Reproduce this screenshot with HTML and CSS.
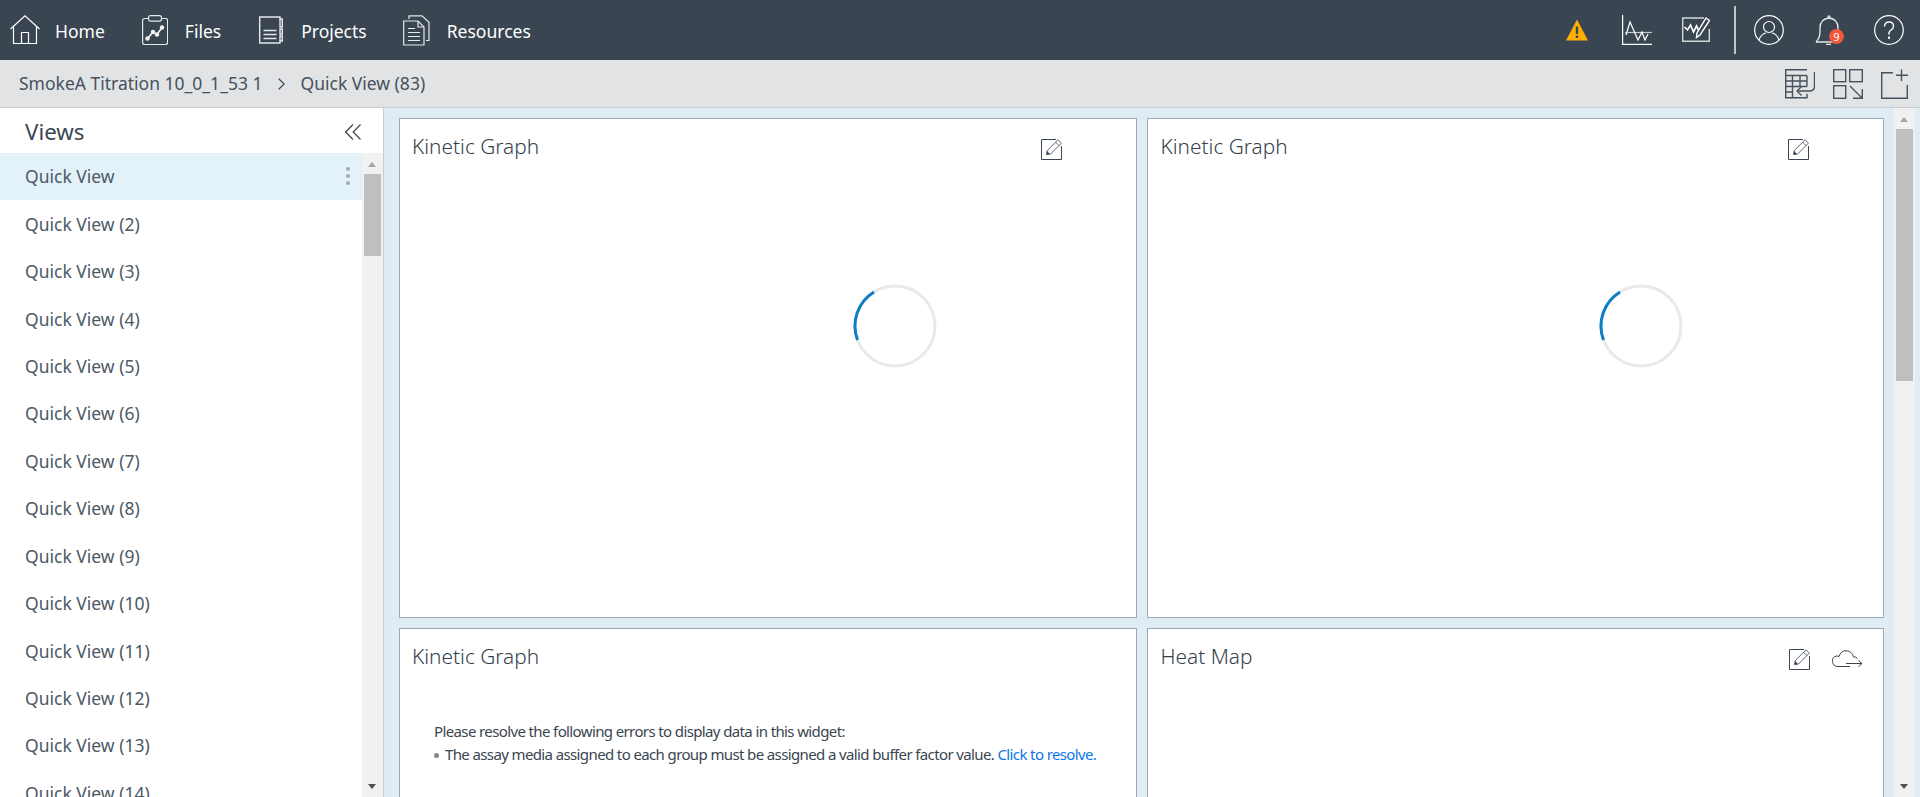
FILE: index.html
```html
<!DOCTYPE html>
<html lang="en">

<head>
    <meta charset="UTF-8" />
    <title>Quick View (83)</title>
    <link rel="stylesheet" href="styles.css">
</head>

<body>
    <svg class="defs" width="0" height="0">
        <symbol id="edit" viewBox="0 0 21 21">
            <path d="M15 .5H.5v20h20V7" fill="none" stroke="#3a4653" stroke-width="1" />
            <path d="M17 .8l3.400 3.400L9.600 15l-3.800.6.4-4z" fill="#fff" stroke="#5c6773" stroke-width="1" />
            <path d="M14.600 3.200l3.400 3.400" stroke="#5c6773" stroke-width="1" />
            <path d="M6 12l3 3-3.800.8z" fill="#3a4653" />
        </symbol>
    </svg>

    <header class="topbar">
        <nav class="topnav">
            <a class="navitem nav-home">
                <svg width="30" height="30" viewBox="0 0 30 30" fill="none" stroke="#fff" stroke-width="1.2">
                    <path d="M.5 14L15 .8 29.500 14" />
                    <path d="M3.500 11.500v17h23v-17" />
                    <path d="M11.500 28.500V17.500h7v11" />
                </svg>
                <span>Home</span>
            </a>
            <a class="navitem nav-files">
                <svg width="26" height="30" viewBox="0 0 26 30" fill="none" stroke="#e6e8ea" stroke-width="1.2">
                    <path d="M7 3.500H2.500Q.6 3.500 .6 5.500v22q0 2 2 2h21q2 0 2-2v-22q0-2-2-2H19" />
                    <rect x="6.500" y=".6" width="13" height="5.500" rx="2" />
                    <path d="M6 23l5-6 4 2.500 5-7" stroke="#fff" stroke-width="1.500" />
                    <circle cx="5.500" cy="23.500" r="1.700" fill="#fff" />
                    <circle cx="11" cy="17" r="1.700" fill="#fff" />
                    <circle cx="15" cy="19.500" r="1.700" fill="#fff" />
                    <circle cx="20" cy="12.500" r="1.700" fill="#fff" />
                </svg>
                <span>Files</span>
            </a>
            <a class="navitem nav-projects">
                <svg width="24" height="28" viewBox="0 0 24 28" fill="none" stroke="#e6e8ea" stroke-width="1.400">
                    <path d="M21 3V1H.7v26H21v-2" />
                    <path d="M21 3h2.300v8H21zM21 13h2.300v5H21zM21 20h2.300v5H21z" />
                    <path d="M4.500 14.500h13M4.500 18.500h13M4.500 22.500h13" />
                </svg>
                <span>Projects</span>
            </a>
            <a class="navitem nav-resources">
                <svg width="28" height="31" viewBox="0 0 28 31" fill="none" stroke="#e6e8ea" stroke-width="1.200">
                    <path d="M6 4V.8h13l7 6.500V25.500h-3" />
                    <path d="M.7 6h14.300l6 6v18H.7z" />
                    <path d="M15 6v6h6" />
                    <path d="M5 13.500h7M5 17.500h12M5 21.500h12M5 25.500h12" />
                </svg>
                <span>Resources</span>
            </a>
        </nav>
        <div class="topicons">
            <svg class="ic-warn" width="22" height="22" viewBox="0 0 22 22">
                <path d="M11 .5L22 21.500H0z" fill="#ffb000" />
                <path d="M9.800 7.500h2.400v7.500H9.800zM9.800 16.500h2.400v2.400H9.800z" fill="#3a4653" />
            </svg>
            <svg class="ic-chart" width="30" height="30" viewBox="0 0 30 30" fill="none" stroke="#fff" stroke-width="1.200">
                <path d="M.6 0v29.400H30" />
                <path d="M3 17.500h27" stroke="#c5c9cd" />
                <path d="M4 20L8 7l4 9 4 9 4-8 3 8 3-6" />
            </svg>
            <svg class="ic-chartedit" width="28" height="26" viewBox="0 0 28 26" fill="none" stroke-width="1.400">
                <path d="M22 1H.7v23.300H27.300V12" stroke="#d5d8db" />
                <path d="M2.500 10l3 3 3-5 3 7 3-6 2 4" stroke="#fff" stroke-width="1.700" />
                <path d="M24 1l3.500 2.500L18 18l-3.500 2.500.5-4.500z" stroke="#fff" fill="#394551" />
            </svg>
            <span class="divider"></span>
            <svg class="ic-user" width="30" height="30" viewBox="0 0 30 30" fill="none" stroke="#fff" stroke-width="1.200">
                <circle cx="15" cy="15" r="14.300" />
                <circle cx="15" cy="12" r="5.500" />
                <path d="M5 25q2-6 7-7M25 25q-2-6-7-7" />
            </svg>
            <span class="bell">
                <svg width="30" height="30" viewBox="0 0 30 30" fill="none" stroke="#e6e8ea" stroke-width="1.300">
                    <path d="M1 27q4-4 4-10v-4q0-9 9-10 9 1 9 10v4q0 4 3 7" />
                    <path d="M1 27h17M11 29.500h5" />
                    <circle cx="14" cy="1.800" r="1" />
                </svg>
                <span class="badge">9</span>
            </span>
            <svg class="ic-help" width="30" height="30" viewBox="0 0 30 30" fill="none" stroke="#fff" stroke-width="1.200">
                <circle cx="15" cy="15" r="14.300" />
                <path d="M10.500 11.500q0-4.500 4.500-4.500t4.500 4q0 2.500-2.500 4t-2 4.500" stroke-width="1.400" />
                <path d="M15 21.500v2.500" stroke-width="1.800" />
            </svg>
        </div>
    </header>

    <div class="crumbbar">
        <span class="crumb">SmokeA Titration 10_0_1_53 1</span>
        <svg class="crumbsep" width="7" height="12" viewBox="0 0 7 12" fill="none" stroke="#3a4653" stroke-width="1.200">
            <path d="M.7 .7L6.200 6 .7 11.300" />
        </svg>
        <span class="crumb">Quick View (83)</span>
        <div class="crumbicons">
            <svg width="30" height="30" viewBox="0 0 30 30" fill="none" stroke="#46525e" stroke-width="1.400">
                <path d="M22 .7H.7v28h21.300v-4" />
                <path d="M.7 6.500h21.300M.7 12h21.300M.7 17.500h21.300M.7 23h7M7.500 6.500V28.700M15 6.500V17.500M22 6.500v11" />
                <path d="M29.500 3v14q0 5-5 5H12" />
                <path d="M16.500 17.500L12 22l4.500 4.500" />
            </svg>
            <svg width="30" height="30" viewBox="0 0 30 30" fill="none" stroke="#46525e" stroke-width="1.400">
                <rect x=".7" y=".7" width="12" height="12" />
                <rect x="16.700" y=".7" width="12.600" height="12" />
                <rect x=".7" y="16.700" width="12" height="12.600" />
                <path d="M17 17l12 12M29.300 20v9.300H20" />
            </svg>
            <svg width="27" height="30" viewBox="0 0 27 30" fill="none" stroke="#46525e" stroke-width="1.400">
                <path d="M12 3.700H.7v25.600h25.600V16" />
                <path d="M20.500 .5v11.500M15 6.200h12" />
            </svg>
        </div>
    </div>

    <div class="workspace">
        <aside class="sidebar">
            <div class="sidehead">
                <h2>Views</h2>
                <svg width="16" height="16" viewBox="0 0 16 16" fill="none" stroke="#3a4653" stroke-width="1.200">
                    <path d="M8 .5L.7 8 8 15.500M15.500 .5L8.200 8l7.300 7.500" />
                </svg>
            </div>
            <div class="sidebody">
                <ul class="viewlist">
                    <li class="active">Quick View<span class="dots"></span></li>
                    <li>Quick View (2)</li>
                    <li>Quick View (3)</li>
                    <li>Quick View (4)</li>
                    <li>Quick View (5)</li>
                    <li>Quick View (6)</li>
                    <li>Quick View (7)</li>
                    <li>Quick View (8)</li>
                    <li>Quick View (9)</li>
                    <li>Quick View (10)</li>
                    <li>Quick View (11)</li>
                    <li>Quick View (12)</li>
                    <li>Quick View (13)</li>
                    <li>Quick View (14)</li>
                </ul>
                <div class="scroll scroll-side">
                    <span class="arrow up"></span>
                    <span class="thumb"></span>
                    <span class="arrow down"></span>
                </div>
            </div>
        </aside>

        <main class="board">
            <div class="cards">
                <section class="card">
                    <div class="cardhead">
                        <h3>Kinetic Graph</h3>
                        <svg class="cardicon icon-kinetic" width="21" height="21"><use href="#edit" /></svg>
                    </div>
                    <svg class="spinner" width="84" height="84" viewBox="0 0 84 84" fill="none" stroke-width="3">
                        <circle cx="42" cy="42" r="40" stroke="#e9e9e9" />
                        <path d="M21 8A40 40 0 0 0 4.500 56" stroke="#0d7ec6" />
                    </svg>
                </section>
                <section class="card">
                    <div class="cardhead">
                        <h3>Kinetic Graph</h3>
                        <svg class="cardicon icon-kinetic" width="21" height="21"><use href="#edit" /></svg>
                    </div>
                    <svg class="spinner" width="84" height="84" viewBox="0 0 84 84" fill="none" stroke-width="3">
                        <circle cx="42" cy="42" r="40" stroke="#e9e9e9" />
                        <path d="M21 8A40 40 0 0 0 4.500 56" stroke="#0d7ec6" />
                    </svg>
                </section>
                <section class="card">
                    <div class="cardhead">
                        <h3>Kinetic Graph</h3>
                    </div>
                    <div class="cardmsg">
                        <p>Please resolve the following errors to display data in this widget:</p>
                        <ul>
                            <li>The assay media assigned to each group must be assigned a valid buffer factor value. <a>Click to resolve.</a></li>
                        </ul>
                    </div>
                </section>
                <section class="card">
                    <div class="cardhead">
                        <h3>Heat Map</h3>
                        <svg class="cardicon icon-heat" width="21" height="21"><use href="#edit" /></svg>
                        <svg class="cardicon icon-cloud" width="31" height="18" viewBox="0 0 31 18" fill="none" stroke="#3a4653" stroke-width="1">
                            <path d="M18 16.500H6q-5 0-5.500-5T5 6q1 0 2 .5Q9 .5 14 .8 20 1 21.500 7q2.500-.5 4 1.500" />
                            <path d="M14 13.500h16M26.500 10.500l3.500 3-3.500 3" />
                        </svg>
                    </div>
                </section>
            </div>
            <div class="scroll scroll-main">
                <span class="arrow up"></span>
                <span class="thumb"></span>
                <span class="arrow down"></span>
            </div>
        </main>
    </div>
</body>

</html>
```

FILE: styles.css
```css
* {
    box-sizing: border-box;
}

html,
body {
    height: 100%;
}

body {
    margin: 0;
    display: flex;
    flex-direction: column;
    overflow: hidden;
    font-family: "Noto Sans", "Open Sans", sans-serif;
    color: #46525e;
}

.defs {
    display: none;
}

/* Barra superior */
.topbar {
    flex: 0 0 60px;
    display: flex;
    align-items: center;
    background: #394551;
    color: #fff;
}

.topnav {
    display: flex;
    align-items: center;
}

.navitem {
    display: flex;
    align-items: center;
    font-size: 17.500px;
}

.navitem span {
    padding-top: 2px;
}

.nav-home {
    margin-left: 10px;
    gap: 15px;
}

.nav-files {
    margin-left: 37px;
    gap: 17px;
}

.nav-projects {
    margin-left: 38px;
    gap: 18px;
}

.nav-resources {
    margin-left: 36px;
    gap: 16px;
}

.topicons {
    margin-left: auto;
    display: flex;
    align-items: center;
}

.ic-warn {
    margin-right: 34px;
}

.ic-chart {
    margin-right: 30px;
}

.ic-chartedit {
    margin-right: 24px;
}

.divider {
    width: 2px;
    height: 48px;
    background: #c0c5c9;
    margin-right: 18px;
}

.ic-user {
    margin-right: 31px;
}

.bell {
    position: relative;
    display: flex;
    margin-right: 29px;
}

.badge {
    position: absolute;
    left: 14px;
    top: 14px;
    width: 15px;
    height: 15px;
    border-radius: 50%;
    background: #f0573c;
    color: #fff;
    font-size: 11px;
    line-height: 15px;
    text-align: center;
}

.ic-help {
    margin-right: 16px;
}

/* Breadcrumb */
.crumbbar {
    flex: 0 0 48px;
    display: flex;
    align-items: center;
    padding-left: 19px;
    background: #e1e3e5;
    border-bottom: 1px solid #c9cbcd;
}

.crumb {
    font-size: 17.500px;
    margin-top: -2px;
}

.crumbsep {
    margin: 0 15px 0 16px;
}

.crumbicons {
    margin-left: auto;
    margin-right: 12px;
    display: flex;
    align-items: center;
    gap: 18px;
}

.workspace {
    flex: 1;
    min-height: 0;
    display: flex;
}

/* Lista de views */
.sidebar {
    flex: 0 0 384px;
    display: flex;
    flex-direction: column;
    background: #fff;
    border-right: 1px solid #c3ced6;
}

.sidehead {
    flex: 0 0 45px;
    display: flex;
    align-items: center;
    justify-content: space-between;
    padding: 2px 22px 0 25px;
}

.sidehead h2 {
    margin: 0;
    font-size: 22.300px;
    font-weight: 400;
    color: #3a4653;
}

.sidebody {
    flex: 1;
    min-height: 0;
    display: flex;
}

.viewlist {
    flex: 1;
    margin: 0;
    padding: 0;
    list-style: none;
    overflow: hidden;
}

.viewlist li {
    height: 47.450px;
    display: flex;
    align-items: center;
    justify-content: space-between;
    padding: 0 12px 1px 25px;
    font-size: 17.500px;
    color: #4d5965;
}

.viewlist li.active {
    background: #e3f1f9;
}

.dots {
    width: 4px;
    height: 4px;
    border-radius: 50%;
    background: #a3abb3;
    box-shadow: 0 -7px 0 #a3abb3, 0 7px 0 #a3abb3;
}

/* Barras de rolagem */
.scroll {
    flex: 0 0 21px;
    position: relative;
    display: flex;
    flex-direction: column;
    background: #f1f1f1;
}

.thumb {
    background: #bfbfbf;
    margin: 0 2px;
}

.arrow {
    position: absolute;
    left: 6px;
    width: 0;
    height: 0;
    border-left: 4.500px solid transparent;
    border-right: 4.500px solid transparent;
}

.arrow.up {
    top: 9px;
    border-bottom: 5px solid #a3a3a3;
}

.arrow.down {
    bottom: 8px;
    border-top: 5px solid #505050;
}

.scroll-side .thumb {
    height: 82px;
    margin-top: 21px;
}

.scroll-main {
    margin-right: 5px;
}

.scroll-main .thumb {
    height: 252px;
    margin-top: 21px;
}

/* Painel de widgets */
.board {
    flex: 1;
    min-width: 0;
    display: flex;
    justify-content: space-between;
    background: #e0ecf4;
    overflow: hidden;
}

.cards {
    flex: 0 0 1486px;
    margin-left: 15px;
    padding-top: 10px;
    display: grid;
    grid-template-columns: 738px 737px;
    grid-auto-rows: 500px;
    gap: 10px 10px;
}

.card {
    background: #fff;
    border: 1px solid #9eaab6;
    padding: 0 13px 0 12px;
}

.card:nth-child(even) {
    padding-left: 12.500px;
}

.cardhead {
    display: flex;
    align-items: flex-start;
    height: 50px;
}

.cardhead h3 {
    margin: 13px 0 0;
    font-size: 20.800px;
    line-height: 28px;
    font-weight: 300;
    color: #333f4c;
}

.cardicon {
    flex: none;
}

.icon-kinetic {
    margin: 20px 0 0 auto;
    position: relative;
    right: 61px;
}

.icon-heat {
    margin: 20px 0 0 auto;
    position: relative;
    right: 22px;
}

.icon-cloud {
    margin: 21px 7px 0 0;
}

.spinner {
    display: block;
    margin: 115px 0 0 441px;
}

.card:nth-child(2) .spinner {
    margin-left: 438px;
}

.cardmsg {
    margin: 41px 0 0 22px;
    font-size: 15px;
    line-height: 23px;
    letter-spacing: -0.620px;
    color: #3a4550;
}

.cardmsg p {
    margin: 0;
}

.cardmsg ul {
    margin: 0;
    padding: 0 0 0 11px;
    list-style: none;
}

.cardmsg li {
    position: relative;
}

.cardmsg li::before {
    content: "";
    position: absolute;
    left: -11px;
    top: 10px;
    width: 5px;
    height: 5px;
    background: #7f8890;
    border-radius: 50%;
}

.cardmsg a {
    color: #0a76e6;
}
```
